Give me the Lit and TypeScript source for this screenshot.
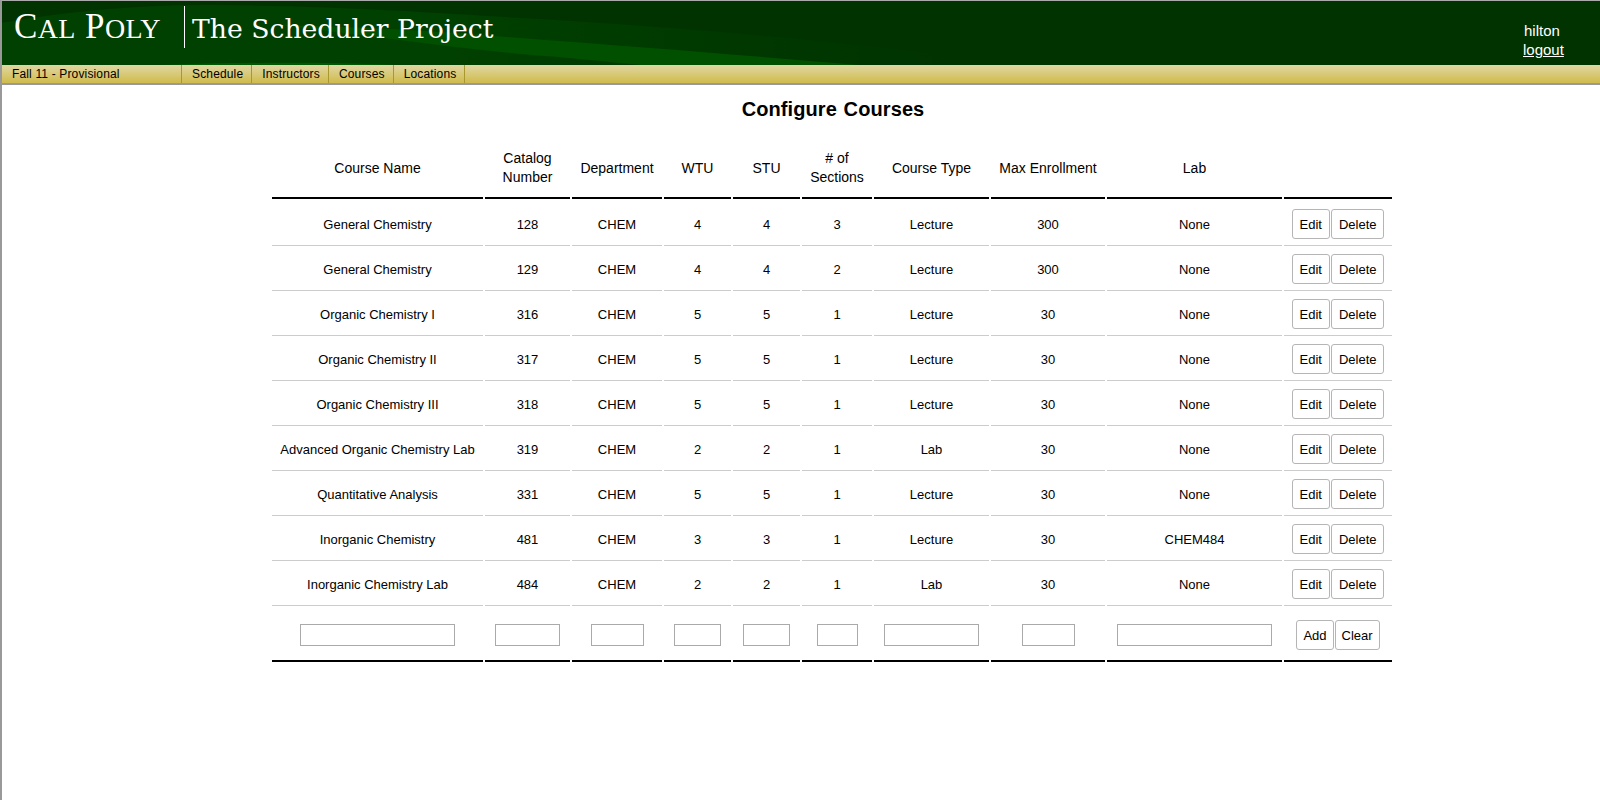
import {LitElement, html, css} from 'lit';
import {customElement} from 'lit/decorators.js';

const COURSES = [
  ['General Chemistry', '128', 'CHEM', '4', '4', '3', 'Lecture', '300', 'None'],
  ['General Chemistry', '129', 'CHEM', '4', '4', '2', 'Lecture', '300', 'None'],
  ['Organic Chemistry I', '316', 'CHEM', '5', '5', '1', 'Lecture', '30', 'None'],
  ['Organic Chemistry II', '317', 'CHEM', '5', '5', '1', 'Lecture', '30', 'None'],
  ['Organic Chemistry III', '318', 'CHEM', '5', '5', '1', 'Lecture', '30', 'None'],
  ['Advanced Organic Chemistry Lab', '319', 'CHEM', '2', '2', '1', 'Lab', '30', 'None'],
  ['Quantitative Analysis', '331', 'CHEM', '5', '5', '1', 'Lecture', '30', 'None'],
  ['Inorganic Chemistry', '481', 'CHEM', '3', '3', '1', 'Lecture', '30', 'CHEM484'],
  ['Inorganic Chemistry Lab', '484', 'CHEM', '2', '2', '1', 'Lab', '30', 'None'],
];

@customElement('app-root')
export class AppRoot extends LitElement {
  static styles = css`
    :host {
      display: block;
      height: 800px;
      box-sizing: border-box;
      border-left: 2px solid #999;
      border-top: 1px solid #aaa;
      font-family: "Liberation Sans", Arial, sans-serif;
      color: #000;
      background: #fff;
      overflow: hidden;
    }
    .banner {
      position: relative;
      height: 64px;
      margin-left: -2px;
      background: #003300;
      color: #fff;
      display: flex;
      overflow: hidden;
    }
    .swoosh { position: absolute; left: 0; top: 0; }
    .logo {
      position: relative;
      width: 184px;
      box-sizing: border-box;
      padding: 7px 0 0 14px;
      font-family: "Liberation Serif", serif;
      font-size: 35px;
      letter-spacing: 0.4px;
      line-height: 38px;
      white-space: nowrap;
    }
    .logo span { font-size: 28px; }
    .title {
      position: relative;
      margin-top: 5px;
      height: 42px;
      border-left: 1px solid #fff;
      padding-left: 7px;
      font-family: "DejaVu Serif", serif;
      font-size: 26.67px;
      line-height: 46px;
      white-space: nowrap;
    }
    .user {
      position: relative;
      margin-left: auto;
      width: 77px;
      padding-top: 20px;
      font-size: 15px;
      line-height: 19px;
    }
    .user a { color: #fff; text-decoration: underline; display: block; }
    .user span { display: block; padding-left: 1px; }
    .nav {
      height: 18px;
      margin-left: -2px;
      display: flex;
      font-size: 12px;
      letter-spacing: 0.15px;
      line-height: 19px;
      background: linear-gradient(#e0d7a3, #d0bb4c);
      border-bottom: 2px solid #999;
    }
    .term {
      width: 182px;
      box-sizing: border-box;
      padding-left: 10px;
      border-left: 2px solid #a8982f;
      border-right: 1px solid #a8982f;
    }
    .tab {
      padding: 0 8px 0 10px;
      border-right: 1px solid #a8982f;
    }
    h1 {
      margin: 13px 0 0;
      padding-left: 64px;
      font-size: 20px;
      letter-spacing: 0.1px;
      word-spacing: 1px;
      line-height: 22px;
      text-align: center;
    }
    table {
      margin: 16px 0 0 268px;
      border-collapse: separate;
      border-spacing: 2px 0;
      table-layout: fixed;
      width: 1124px;
      font-size: 13px;
    }
    th {
      font-weight: normal;
      font-size: 14px;
      line-height: 19px;
      height: 58px;
      padding: 3px 0 0;
      border-bottom: 2px solid #000;
    }
    td {
      height: 30px;
      padding: 8px 0 6px;
      text-align: center;
      border-bottom: 1px solid #ccc;
    }
    tbody tr:first-child td { padding-top: 10px; }
    .add td { padding: 14px 0 10px; border-bottom: 2px solid #000; }
    input {
      box-sizing: border-box;
      display: block;
      margin: 0 auto;
      height: 22px;
      padding: 0;
      border: 1px solid #aaa;
      background: #fff;
    }
    .acts { display: flex; justify-content: center; gap: 1px; }
    button {
      height: 30px;
      padding: 0 7px;
      font: 13px "Liberation Sans", Arial, sans-serif;
      color: #000;
      background: #fff;
      border: 1px solid #b5b5b5;
      border-radius: 3px;
    }
    button.narrow { padding: 0 6px; }
    .w-0 { width: 155px; } .w-1 { width: 65px; } .w-2 { width: 53px; }
    .w-3 { width: 47px; } .w-4 { width: 47px; } .w-5 { width: 41px; }
    .w-6 { width: 95px; } .w-7 { width: 53px; } .w-8 { width: 155px; }
  `;

  render() {
    return html`
      <div class="banner">
        <svg class="swoosh" width="1000" height="64" viewBox="0 0 1000 64">
          <defs>
            <linearGradient id="fade" gradientUnits="userSpaceOnUse" x1="450" y1="0" x2="950" y2="0">
              <stop offset="0" stop-color="#004000"/>
              <stop offset="1" stop-color="#003300"/>
            </linearGradient>
          </defs>
          <path d="M0 22 C70 10 140 3 220 4 C340 5 440 12 520 17 C640 24 760 32 1000 60 L1000 64 L0 64Z" fill="url(#fade)"/>
          <path d="M280 24 C360 26 440 30 520 37 C640 46 740 54 860 64 L640 64 C590 59 560 56 520 53 C440 45 360 34 280 24Z" fill="#005000"/>
          <path d="M160 64 C230 62 300 60 400 64Z" fill="#005a00"/>
        </svg>
        <div class="logo">C<span>AL</span> P<span>OLY</span></div>
        <div class="title">The Scheduler Project</div>
        <div class="user"><span>hilton</span><a href="#">logout</a></div>
      </div>
      <div class="nav">
        <div class="term">Fall 11 - Provisional</div>
        ${['Schedule', 'Instructors', 'Courses', 'Locations'].map((t) => html`<div class="tab">${t}</div>`)}
      </div>
      <h1>Configure Courses</h1>
      <table>
        <colgroup>
          <col style="width:211px"><col style="width:85px"><col style="width:90px">
          <col style="width:67px"><col style="width:67px"><col style="width:70px">
          <col style="width:115px"><col style="width:114px"><col style="width:175px"><col style="width:108px">
        </colgroup>
        <thead>
          <tr>
            <th>Course Name</th><th>Catalog<br>Number</th><th>Department</th><th>WTU</th><th>STU</th>
            <th># of<br>Sections</th><th>Course Type</th><th>Max Enrollment</th><th>Lab</th><th></th>
          </tr>
        </thead>
        <tbody>
          ${COURSES.map((row) => html`
            <tr>
              ${row.map((v) => html`<td>${v}</td>`)}
              <td><div class="acts"><button>Edit</button><button>Delete</button></div></td>
            </tr>`)}
          <tr class="add">
            ${COURSES[0].map((_, i) => html`<td><input class="w-${i}"></td>`)}
            <td><div class="acts"><button class="narrow">Add</button><button class="narrow">Clear</button></div></td>
          </tr>
        </tbody>
      </table>
    `;
  }
}
